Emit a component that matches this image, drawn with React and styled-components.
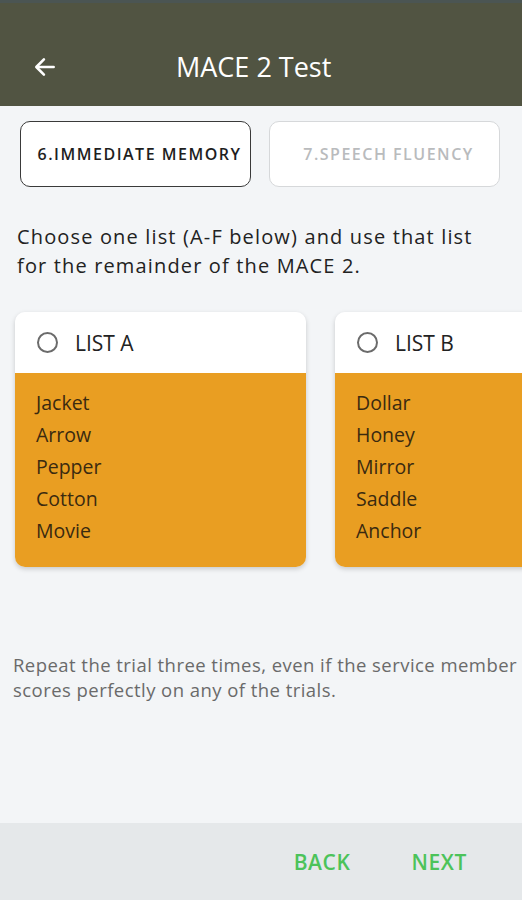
import React from 'react';
import styled, { createGlobalStyle } from 'styled-components';

const GlobalStyle = createGlobalStyle`
  html, body {
    margin: 0;
    padding: 0;
    background: #f3f5f7;
    font-family: "Open Sans", "Noto Sans", sans-serif;
  }
`;

const Screen = styled.div`
  width: 522px;
  height: 900px;
  display: flex;
  flex-direction: column;
  background: #f3f5f7;
  overflow: hidden;
`;

const StatusStrip = styled.div`
  height: 3px;
  background: #4b5553;
`;

const Header = styled.header`
  height: 103px;
  background: #515442;
  display: flex;
  align-items: flex-end;
  padding: 0 0 21px 32px;
  box-sizing: border-box;
  color: #fff;
`;

const Title = styled.h1`
  margin: 0 0 0 118px;
  font-size: 27px;
  font-weight: 400;
  line-height: 36px;
`;

const BackIcon = styled.svg`
  width: 26px;
  height: 26px;
  margin-bottom: 5px;
`;

const Tabs = styled.div`
  display: flex;
  gap: 18px;
  padding: 15px 0 0 20px;
`;

const Tab = styled.div`
  flex: 0 0 auto;
  width: 231px;
  height: 66px;
  box-sizing: border-box;
  padding-left: 8px;
  border: ${p => (p.$active ? '1.5px solid #3a3a3a' : '1.5px solid #d6d8da')};
  border-radius: 10px;
  background: #fff;
  display: flex;
  align-items: center;
  justify-content: center;
  font-size: 16px;
  font-weight: 600;
  letter-spacing: 1.5px;
  color: ${p => (p.$active ? '#1e1e1e' : '#b9bbbd')};
`;

const Instruction = styled.p`
  margin: 35px 0 0 17px;
  font-size: 20px;
  line-height: 29px;
  letter-spacing: 1.15px;
  color: #222;
`;

const CardRow = styled.div`
  display: flex;
  gap: 29px;
  padding: 32px 0 0 15px;
`;

const Card = styled.div`
  flex: 0 0 auto;
  width: 291px;
  height: 255px;
  border-radius: 10px;
  overflow: hidden;
  display: flex;
  flex-direction: column;
  box-shadow: 0 2px 5px rgba(0, 0, 0, 0.18);
`;

const CardHead = styled.div`
  height: 61px;
  background: #fff;
  display: flex;
  align-items: center;
  padding-left: 22px;
  gap: 17px;
  font-size: 21px;
  color: #222;
`;

const Radio = styled.span`
  width: 17px;
  height: 17px;
  border: 2px solid #6b6b6b;
  border-radius: 50%;
`;

const CardBody = styled.div`
  flex: 1;
  background: #e99e22;
  padding: 14px 0 0 21px;
`;

const Word = styled.div`
  font-size: 19.5px;
  line-height: 32px;
  color: #3a2a10;
`;

const Note = styled.p`
  margin: 85px 0 0 13px;
  font-size: 18.5px;
  line-height: 25px;
  letter-spacing: 0.45px;
  white-space: nowrap;
  color: #6a6a6a;
`;

const Footer = styled.footer`
  margin-top: auto;
  height: 77px;
  background: #e5e8ea;
  display: flex;
  align-items: center;
  justify-content: flex-end;
  gap: 61px;
  padding-right: 55px;
`;

const FooterButton = styled.button`
  border: none;
  background: none;
  padding: 0;
  font-family: inherit;
  font-size: 21px;
  font-weight: 600;
  letter-spacing: 0.6px;
  color: #4cc35a;
`;

const lists = [
  { name: 'LIST A', words: ['Jacket', 'Arrow', 'Pepper', 'Cotton', 'Movie'] },
  { name: 'LIST B', words: ['Dollar', 'Honey', 'Mirror', 'Saddle', 'Anchor'] },
];

export default function App() {
  return (
    <Screen>
      <GlobalStyle />
      <StatusStrip />
      <Header>
        <BackIcon viewBox="0 0 24 24" fill="none" stroke="#fff" strokeWidth="2.4" strokeLinecap="round" strokeLinejoin="round">
          <path d="M20 12H5" />
          <path d="M11 5l-7 7 7 7" />
        </BackIcon>
        <Title>MACE 2 Test</Title>
      </Header>
      <Tabs>
        <Tab $active>6.IMMEDIATE MEMORY</Tab>
        <Tab>7.SPEECH FLUENCY</Tab>
      </Tabs>
      <Instruction>
        Choose one list (A-F below) and use that list
        <br />
        for the remainder of the MACE 2.
      </Instruction>
      <CardRow>
        {lists.map(l => (
          <Card key={l.name}>
            <CardHead>
              <Radio />
              {l.name}
            </CardHead>
            <CardBody>
              {l.words.map(w => (
                <Word key={w}>{w}</Word>
              ))}
            </CardBody>
          </Card>
        ))}
      </CardRow>
      <Note>
        Repeat the trial three times, even if the service member
        <br />
        scores perfectly on any of the trials.
      </Note>
      <Footer>
        <FooterButton>BACK</FooterButton>
        <FooterButton>NEXT</FooterButton>
      </Footer>
    </Screen>
  );
}
